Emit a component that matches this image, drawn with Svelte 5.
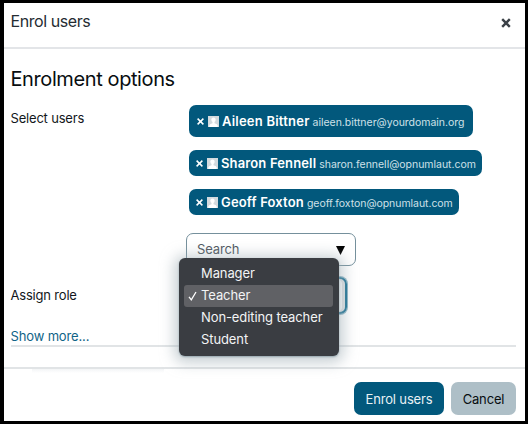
<script>
  const users = [
    { name: 'Aileen Bittner', email: 'aileen.bittner@yourdomain.org', cls: 'first' },
    { name: 'Sharon Fennell', email: 'sharon.fennell@opnumlaut.com', cls: 'second' },
    { name: 'Geoff Foxton', email: 'geoff.foxton@opnumlaut.com', cls: 'third' }
  ];
  const roles = ['Manager', 'Teacher', 'Non-editing teacher', 'Student'];
  const selected = 'Teacher';
</script>

<div class="dialog">
  <header>
    <span class="title">Enrol users</span>
    <svg class="close" width="10" height="10" viewBox="0 0 10 10"><path d="M1.2 1.2 8.8 8.8M8.8 1.2 1.2 8.8" /></svg>
  </header>
  <main>
    <h2><span>Enrolment options</span></h2>
    <div class="row">
      <div class="label select-label">Select users</div>
      <div class="field">
        {#each users as user}
          <div class="chip {user.cls}">
            <svg class="x" width="7" height="7" viewBox="0 0 7 7"><path d="M.6.6 6.4 6.4M6.4.6.6 6.4" /></svg>
            <svg class="avatar" width="11" height="11" viewBox="0 0 11 11">
              <rect width="11" height="11" fill="#d3dade" />
              <circle cx="5.5" cy="3.7" r="2.2" fill="#fff" />
              <path d="M1.3 11V9.2Q2 7.7 4.5 7.2V5h2v2.2Q9 7.7 9.7 9.2V11z" fill="#fff" />
            </svg>
            <b>{user.name}</b><small>{user.email}</small>
          </div>
        {/each}
        <div class="search">
          <span>Search</span>
          <svg class="arrow" width="9" height="9" viewBox="0 0 9 9"><path d="M0 0h9L4.5 9z" /></svg>
        </div>
      </div>
    </div>
    <div class="row role">
      <div class="label role-label">Assign role</div>
      <div class="field">
        <div class="select"></div>
        <div class="menu">
          {#each roles as role}
            <div class="item" class:on={role === selected}>
              <span class="tick">
                {#if role === selected}
                  <svg width="9" height="10" viewBox="0 0 9 10"><path d="M1 5.8 3.3 8.8 8 1" /></svg>
                {/if}
              </span>
              <span class="role-name">{role}</span>
            </div>
          {/each}
        </div>
      </div>
    </div>
    <div class="more"><span>Show more...</span></div>
  </main>
  <footer>
    <button class="primary"><span>Enrol users</span></button>
    <button class="secondary"><span>Cancel</span></button>
  </footer>
</div>

<style>
  :global(body) { margin: 0; background: #000; }
  .dialog {
    box-sizing: border-box;
    width: 528px;
    height: 424px;
    border: solid #000;
    border-width: 3px 3px 3px 4px;
    background: #fff;
    color: #12171b;
    font-family: Inter, "Liberation Sans", sans-serif;
    font-size: 13px;
    display: flex;
    flex-direction: column;
    white-space: nowrap;
  }
  header {
    box-sizing: border-box;
    height: 46px;
    flex: none;
    display: flex;
    justify-content: space-between;
    padding: 8px 14px 0 6.5px;
    border-bottom: 2px solid #e3e5e8;
  }
  .title { font-size: 16px; line-height: 20px; letter-spacing: -0.43px; color: #252c32; }
  .close { margin-top: 7px; fill: none; stroke: #3b4147; stroke-width: 2.4; }
  main { flex: none; height: 318px; padding: 0 7px 0 6.5px; }
  h2 { margin: 0; padding-top: 18px; height: 37px; font-size: 20px; line-height: 25px; font-weight: 400; letter-spacing: -0.4px; color: #080d10; }
  .row { display: flex; }
  .label { width: 175.5px; flex: none; line-height: 18px; letter-spacing: -0.19px; }
  .select-label { padding-top: 5px; }
  .role-label { padding-top: 9px; }
  .field { position: relative; display: flex; flex-direction: column; align-items: flex-start; }
  .chip {
    box-sizing: border-box;
    height: 26px;
    margin: 0 0 13px 3px;
    padding: 0 0 0 7px;
    border-radius: 7px;
    background: #02587c;
    color: #fff;
    display: flex;
    align-items: center;
  }
  .chip.first { width: 284px; height: 32px; margin-top: 1px; padding-left: 8px; }
  .chip.second { width: 293px; }
  .chip.third { width: 270px; margin-bottom: 18px; }
  .x { fill: none; stroke: #fff; stroke-width: 1.5; margin-right: 4px; margin-top: 1px; }
  .avatar { margin-right: 3px; margin-top: 1px; }
  b { font-size: 13px; font-weight: 600; letter-spacing: 0.22px; }
  small { font-size: 10.5px; letter-spacing: -0.02px; color: #cfe0e8; margin: 2px 0 0 3px; }
  .second b { letter-spacing: 0.14px; }
  .third b { letter-spacing: 0.16px; }
  .third small { letter-spacing: -0.05px; }
  .search {
    box-sizing: border-box;
    width: 170px;
    height: 33px;
    border: 1px solid #75909c;
    border-radius: 7px;
    padding: 0 10px 2px;
    letter-spacing: -0.15px;
    display: flex;
    align-items: center;
    justify-content: space-between;
    color: #4e565d;
  }
  .arrow { margin-top: 3px; }
  .role { margin-top: 11px; height: 50px; }
  .select {
    box-sizing: border-box;
    width: 161px;
    height: 37px;
    border: 2px solid #1b7193;
    box-shadow: 0 0 0 1px #8bb4c4, inset -3px 0 0 #e0e4e6;
    border-radius: 7px;
  }
  .menu {
    position: absolute;
    left: -7px;
    top: -19px;
    box-sizing: border-box;
    width: 160px;
    height: 98px;
    padding: 4.5px 5px;
    border-radius: 6px;
    background: #3a3d42;
    box-shadow: 0 2px 14px 5px #9cacb38c, 0 1px 2px #8fa2aa;
    color: #f2f4f5;
    letter-spacing: -0.1px;
  }
  .item { height: 22px; width: 149px; display: flex; align-items: center; border-radius: 3px; }
  .on { background: #606165; }
  .role-name { margin-top: -1px; }
  .tick { width: 17px; display: flex; padding-left: 4px; box-sizing: border-box; }
  .tick path { fill: none; stroke: #fff; stroke-width: 1.3; }
  .more { height: 18px; line-height: 19px; letter-spacing: -0.15px; color: #116487; border-bottom: 2px solid #e1e4e6; margin-right: 2px; }
  footer {
    box-sizing: border-box;
    flex: 1;
    border-top: 2px solid #e1e4e6;
    background: linear-gradient(#f3f5f6, #fff) 28px 0 / 132px 4px no-repeat;
    display: flex;
    justify-content: flex-end;
    gap: 7px;
    padding: 13px 9px 0 0;
  }
  button {
    height: 33px;
    border: 0;
    padding: 0;
    border-radius: 7px;
    font: inherit;
    letter-spacing: -0.15px;
  }
  .primary { width: 90px; background: #02587c; color: #e9f1f4; }
  .secondary { width: 65px; background: #aebfc7; color: #080d10; }
</style>
